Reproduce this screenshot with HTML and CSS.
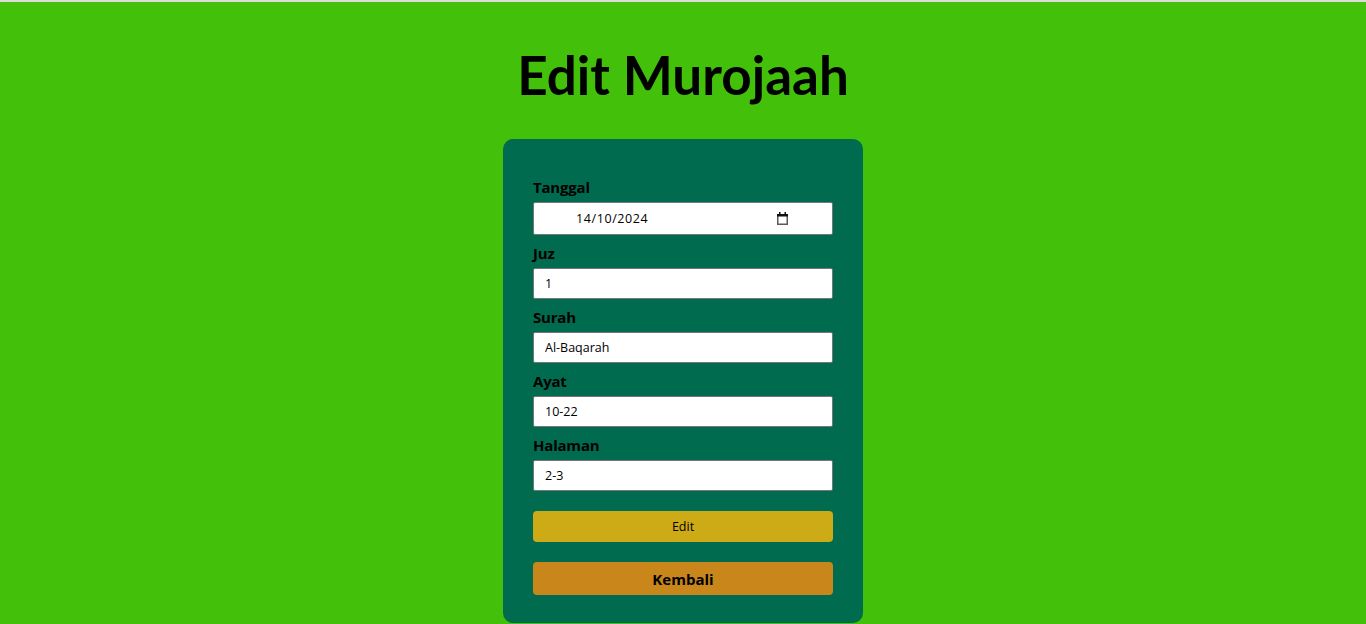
FILE: index.html
```html
<!DOCTYPE html>
<html lang="id">
<head>
<meta charset="utf-8">
<title>Edit Murojaah</title>
<link rel="stylesheet" href="styles.css">
</head>
<body>
<div class="topline"></div>
<main class="page">
  <h1 class="title">Edit Murojaah</h1>
  <form class="card">
    <div class="group">
      <label class="label" for="tanggal">Tanggal</label>
      <div class="date-wrap">
        <input class="field field-date" type="text" id="tanggal" value="14/10/2024">
        <svg class="cal-icon" width="11" height="13" viewBox="0 0 11 13" aria-hidden="true">
          <rect x="0.75" y="2.75" width="9.5" height="9.5" fill="none" stroke="#5a5a5a" stroke-width="1.5"/>
          <rect x="0" y="2" width="11" height="2.5" fill="#111"/>
          <rect x="2" y="0" width="1.5" height="3" fill="#111"/>
          <rect x="7.5" y="0" width="1.5" height="3" fill="#111"/>
        </svg>
      </div>
    </div>
    <div class="group">
      <label class="label" for="juz">Juz</label>
      <input class="field" type="text" id="juz" value="1">
    </div>
    <div class="group">
      <label class="label" for="surah">Surah</label>
      <input class="field" type="text" id="surah" value="Al-Baqarah">
    </div>
    <div class="group">
      <label class="label" for="ayat">Ayat</label>
      <input class="field" type="text" id="ayat" value="10-22">
    </div>
    <div class="group">
      <label class="label" for="halaman">Halaman</label>
      <input class="field" type="text" id="halaman" value="2-3">
    </div>
    <button class="btn btn-edit" type="button">Edit</button>
    <button class="btn btn-back" type="button">Kembali</button>
  </form>
</main>
</body>
</html>
```
FILE: styles.css
```css
html, body {
  margin: 0;
  padding: 0;
}
body {
  background: #43c00a;
  font-family: "Open Sans", "Noto Sans", sans-serif;
  color: #000;
  height: 624px;
  overflow: hidden;
}
.topline {
  height: 2px;
  background: #dcdcdc;
}
.page {
  display: flex;
  flex-direction: column;
  align-items: center;
}
.title {
  margin: 38px 0 29px;
  font-family: "Lato", "Open Sans", sans-serif;
  font-size: 53px;
  line-height: 70px;
  font-weight: 700;
}
.card {
  width: 300px;
  background: #006b4f;
  border-radius: 10px;
  padding: 38px 30px 28px;
  display: flex;
  flex-direction: column;
}
.group {
  display: flex;
  flex-direction: column;
  margin-bottom: 8px;
}
.label {
  font-size: 15px;
  font-weight: 700;
  line-height: 20px;
  margin-bottom: 5px;
  letter-spacing: -0.2px;
}
.field {
  box-sizing: border-box;
  width: 300px;
  height: 31px;
  border: 1px solid #767676;
  border-radius: 2px;
  background: #fff;
  padding: 0 11px;
  font-family: "Open Sans", "Noto Sans", sans-serif;
  font-size: 12.5px;
  color: #000;
  outline: none;
}
.date-wrap {
  position: relative;
  width: 300px;
}
.field-date {
  display: block;
  height: 33px;
  padding: 0 40px 0 42px;
  letter-spacing: 0.6px;
}
.cal-icon {
  position: absolute;
  right: 45px;
  top: 10px;
}
.btn {
  box-sizing: border-box;
  width: 300px;
  border: none;
  border-radius: 4px;
  font-family: "Open Sans", "Noto Sans", sans-serif;
  color: #000;
  cursor: pointer;
}
.btn-edit {
  margin-top: 12px;
  height: 31px;
  background: #cdab16;
  font-size: 12.5px;
}
.btn-back {
  margin-top: 20px;
  height: 33px;
  background: #c9871b;
  font-size: 15px;
  font-weight: 700;
}
```
